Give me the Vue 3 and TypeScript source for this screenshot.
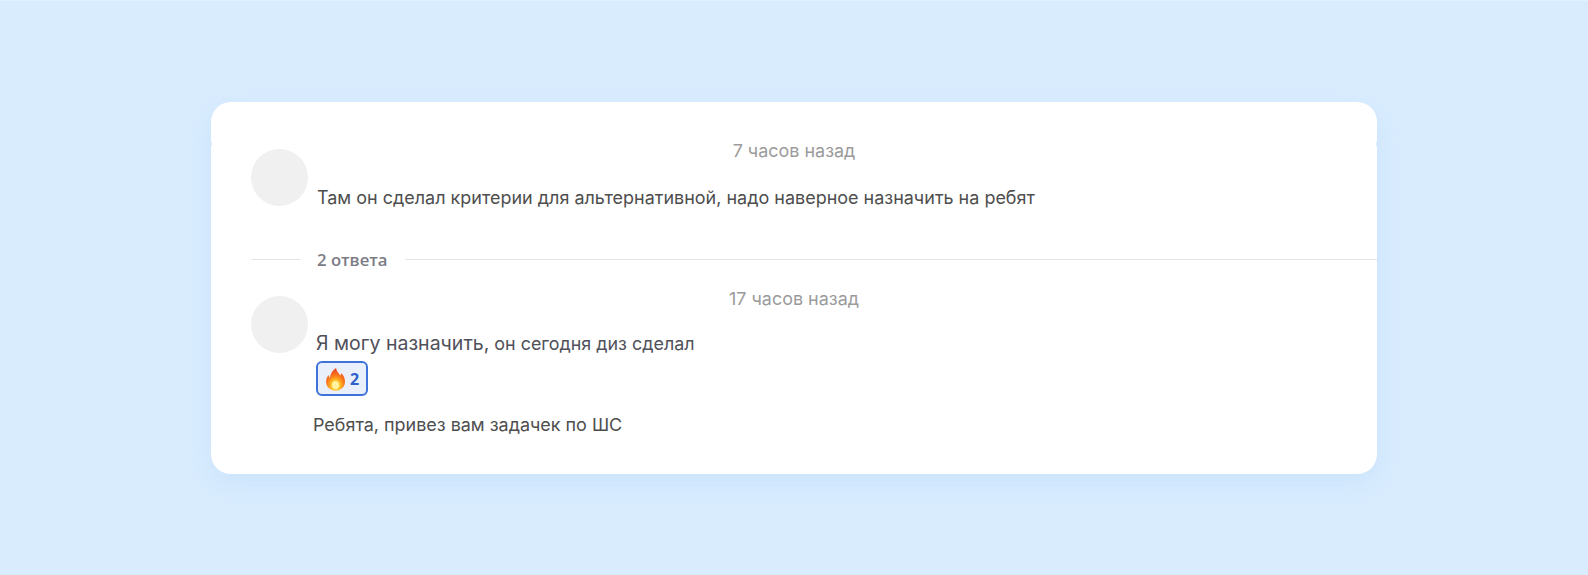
<script setup lang="ts">
interface Reply {
  time: string
}
const first: Reply = { time: '7 часов назад' }
const second: Reply = { time: '17 часов назад' }
</script>

<template>
  <main class="page">
    <section class="card">
      <article class="message first">
        <div class="time">{{ first.time }}</div>
        <div class="avatar"></div>
        <p class="text first-text">Там он сделал критерии для альтернативной, надо наверное назначить на ребят</p>
      </article>

      <div class="divider">
        <span class="rule short"></span>
        <span class="label">2 ответа</span>
        <span class="rule"></span>
      </div>

      <article class="message second">
        <div class="time">{{ second.time }}</div>
        <div class="avatar"></div>
        <div class="body">
          <p class="text second-text"><span class="big">Я могу назначить,</span> он сегодня диз сделал</p>
          <button class="reaction" type="button">
            <svg class="flame" viewBox="0 0 20 24" width="21" height="24" aria-hidden="true">
              <defs>
                <radialGradient id="fl" cx="50%" cy="78%" r="75%">
                  <stop offset="0" stop-color="#fff6a8" />
                  <stop offset="0.28" stop-color="#ffc928" />
                  <stop offset="0.6" stop-color="#fb7a1c" />
                  <stop offset="1" stop-color="#e8402a" />
                </radialGradient>
              </defs>
              <path fill="url(#fl)" d="M10.5 1c.6 3.4 2.6 5 4.4 7.4.6-.7.9-1.500.9-2.500 2.400 2.600 3.700 5.500 3.700 8.500 0 5.300-4 9.100-9.400 9.100S.6 19.700.6 14.700c0-2.700 1-4.800 2.400-6.700.2 1.200.6 2 1.400 2.700C4.600 6.800 7 3.600 10.500 1z" />
              <ellipse cx="10" cy="18" rx="3.600" ry="4" fill="#fff3a0" />
            </svg>
            <span class="count">2</span>
          </button>
          <p class="text third-text">Ребята, привез вам задачек по ШС</p>
        </div>
      </article>
    </section>
  </main>
</template>

<style>
html, body { margin: 0; background: #d9ecfe; }
</style>

<style scoped>
.page {
  box-sizing: border-box;
  width: 1588px;
  height: 575px;
  padding: 101px 211px 0;
  border-top: 1px solid #e2f1ff;
  background: #d9ecfe;
  font-family: Inter, "Noto Sans", sans-serif;
}
.card {
  position: relative;
  box-sizing: border-box;
  width: 1166px;
  height: 372px;
  padding-top: 39px;
  background: #fff;
  border-radius: 20px;
  box-shadow: 0 10px 24px rgba(150, 195, 245, 0.2);
}
.card::before,
.card::after {
  content: "";
  position: absolute;
  top: 39px;
  width: 1px;
  height: 6px;
  border-radius: 50%;
  background: #d9ecfe;
}
.card::before { left: 0; }
.card::after { right: 0; }
.message {
  display: grid;
  grid-template-columns: 40px 57px 1fr;
}
.time {
  grid-column: 1 / -1;
  grid-row: 1;
  text-align: center;
  font-size: 17.95px;
  line-height: 20px;
  color: #9b9b9b;
}
.second .time { margin-top: 1px; }
.avatar {
  grid-column: 2;
  grid-row: 1 / span 2;
  width: 57px;
  height: 57px;
  margin-top: 8px;
  border-radius: 50%;
  background: #f0f0f0;
}
.text {
  margin: 0;
  font-size: 17.95px;
  line-height: 22px;
  color: #4e4e4e;
}
.first-text {
  grid-column: 3;
  grid-row: 2;
  margin: 26px 0 0 9px;
  font-size: 17.98px;
}
.divider {
  display: flex;
  align-items: center;
  margin: 40px 0 0 41px;
  height: 20px;
}
.rule {
  flex: 1;
  height: 1px;
  background: #e4e4e6;
}
.rule.short {
  flex: none;
  width: 48px;
}
.label {
  padding: 0 17px;
  font-family: "Open Sans", sans-serif;
  font-size: 16.7px;
  font-weight: 600;
  color: #7c7c86;
}
.second {
  margin-top: 19px;
}
.body {
  grid-column: 3;
  grid-row: 2;
  min-width: 0;
}
.second-text {
  margin: 23px 0 0 8px;
  font-size: 17.9px;
  color: #50505a;
}
.big {
  font-size: 19.5px;
}
.reaction {
  display: flex;
  align-items: center;
  gap: 4px;
  box-sizing: border-box;
  width: 52px;
  height: 35px;
  margin: 6px 0 0 8px;
  padding: 0 0 0 7px;
  border: 2px solid #3f73dc;
  border-radius: 6px;
  background: #e9f0fc;
}
.count {
  font-family: "Open Sans", sans-serif;
  font-size: 16px;
  font-weight: 700;
  color: #2f62cc;
}
.third-text {
  margin: 18px 0 0 5px;
}
</style>
